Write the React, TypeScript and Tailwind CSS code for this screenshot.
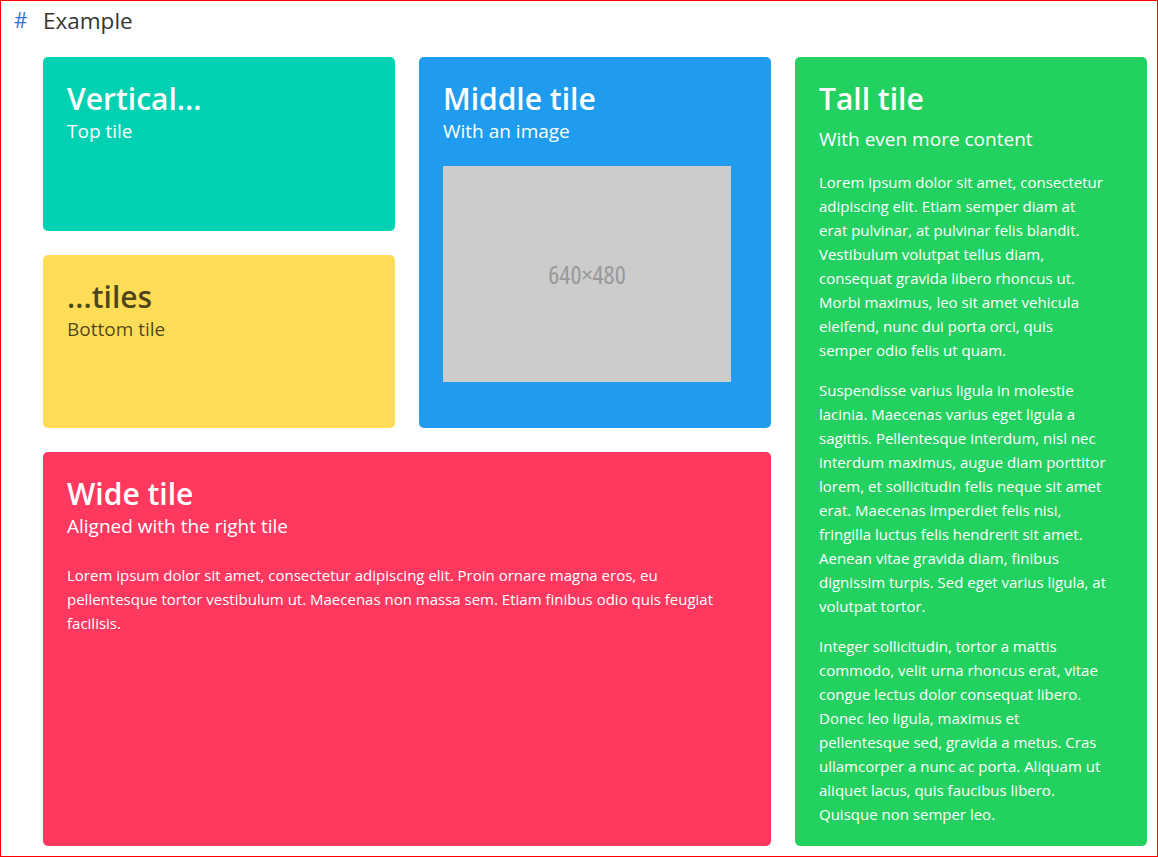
const font = "font-['Open_Sans','Noto_Sans',sans-serif]"

function Title({ children, dark }: { children: React.ReactNode; dark?: boolean }) {
  return (
    <h2 className={`text-[30px] leading-[36px] font-semibold ${dark ? 'text-black/70' : 'text-white'}`}>
      {children}
    </h2>
  )
}

function Subtitle({
  children,
  dark,
  className = 'mt-[2px]',
}: {
  children: React.ReactNode
  dark?: boolean
  className?: string
}) {
  return (
    <p className={`text-[19px] leading-[25px] ${dark ? 'text-black/70' : 'text-white'} ${className}`}>{children}</p>
  )
}

export default function App() {
  return (
    <div className={`w-[1158px] h-[857px] border border-[#ff0000] bg-white overflow-hidden ${font}`}>
      <div className="flex items-center h-[40px] pl-[13px]">
        <span className="text-[21px] text-[#3273dc] w-[29px]">#</span>
        <span className="text-[22.5px] text-[#363636] font-medium">Example</span>
      </div>

      <div className="flex gap-6 pl-[42px] mt-[16px] h-[789px]">
        <div className="flex flex-col gap-6 w-[728px]">
          <div className="flex gap-6 h-[371px]">
            <div className="flex flex-col gap-6 w-[352px]">
              <div className="flex-1 rounded-[5px] bg-[#00d1b2] p-6">
                <Title>Vertical...</Title>
                <Subtitle>Top tile</Subtitle>
              </div>
              <div className="flex-1 rounded-[5px] bg-[#ffdd57] p-6">
                <Title dark>...tiles</Title>
                <Subtitle dark>Bottom tile</Subtitle>
              </div>
            </div>
            <div className="w-[352px] rounded-[5px] bg-[#209cee] p-6">
              <Title>Middle tile</Title>
              <Subtitle>With an image</Subtitle>
              <div className="mt-[22px] w-[288px] h-[216px] bg-[#cccccc] flex items-center justify-center">
                <span className="text-[26px] font-medium text-[#999999] [font-stretch:75%]">640×480</span>
              </div>
            </div>
          </div>
          <div className="flex-1 rounded-[5px] bg-[#ff3860] p-6">
            <Title>Wide tile</Title>
            <Subtitle>Aligned with the right tile</Subtitle>
            <p className="mt-6 max-w-[660px] text-[15px] leading-6 text-white">
              Lorem ipsum dolor sit amet, consectetur adipiscing elit. Proin ornare magna eros, eu pellentesque tortor
              vestibulum ut. Maecenas non massa sem. Etiam finibus odio quis feugiat facilisis.
            </p>
          </div>
        </div>

        <div className="w-[352px] rounded-[5px] bg-[#23d160] p-6 text-white">
          <Title>Tall tile</Title>
          <Subtitle className="mt-[10px]">With even more content</Subtitle>
          <div className="mt-[18px] w-[288px] flex flex-col gap-4 text-[15px] leading-6">
            <p>
              Lorem ipsum dolor sit amet, consectetur adipiscing elit. Etiam semper diam at erat pulvinar, at pulvinar
              felis blandit. Vestibulum volutpat tellus diam, consequat gravida libero rhoncus ut. Morbi maximus, leo sit
              amet vehicula eleifend, nunc dui porta orci, quis semper odio felis ut quam.
            </p>
            <p>
              Suspendisse varius ligula in molestie lacinia. Maecenas varius eget ligula a sagittis. Pellentesque
              interdum, nisl nec interdum maximus, augue diam porttitor lorem, et sollicitudin felis neque sit amet erat.
              Maecenas imperdiet felis nisi, fringilla luctus felis hendrerit sit amet. Aenean vitae gravida diam, finibus
              dignissim turpis. Sed eget varius ligula, at volutpat tortor.
            </p>
            <p>
              Integer sollicitudin, tortor a mattis commodo, velit urna rhoncus erat, vitae congue lectus dolor consequat
              libero. Donec leo ligula, maximus et pellentesque sed, gravida a metus. Cras ullamcorper a nunc ac porta.
              Aliquam ut aliquet lacus, quis faucibus libero. Quisque non semper leo.
            </p>
          </div>
        </div>
      </div>
    </div>
  )
}
